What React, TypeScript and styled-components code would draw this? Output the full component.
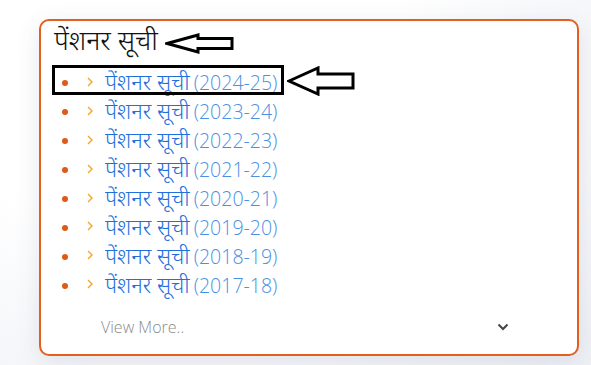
import React from "react";
import styled, { createGlobalStyle } from "styled-components";

const Global = createGlobalStyle`
  html, body { margin: 0; padding: 0; background: #ffffff; }
  body { width: 591px; height: 365px; overflow: hidden; font-family: "Noto Sans", sans-serif; }
`;

const Page = styled.div`
  width: 591px;
  height: 365px;
  padding: 19px 0 0 39px;
  box-sizing: border-box;
  background: radial-gradient(ellipse at 30% 20%, #ffffff 40%, #eef0f5 100%);
`;

const Card = styled.div`
  position: relative;
  width: 540px;
  height: 337px;
  box-sizing: border-box;
  border: 2px solid #e2601f;
  border-radius: 10px;
  background: #fff;
  box-shadow: 0 6px 24px rgba(60, 70, 110, 0.12);
  padding: 6px 0 0 13px;
  display: flex;
  flex-direction: column;
`;

const TitleRow = styled.div`
  display: flex;
  align-items: center;
  height: 34px;
`;

const Title = styled.h3`
  margin: 0;
  font-weight: 300;
  font-size: 27px;
  color: #111;
  font-family: "Noto Sans Devanagari", "Noto Sans", sans-serif;
  line-height: 34px;
`;

const List = styled.ul`
  list-style: none;
  margin: 8px 0 0 0;
  padding: 0;
`;

const Item = styled.li`
  position: relative;
  height: 28.9px;
  display: flex;
  align-items: center;
  padding-left: 8px;
  &::before {
    content: "";
    width: 6px;
    height: 6px;
    border-radius: 50%;
    background: #df5a17;
    margin-right: 19px;
    flex: none;
  }
`;

const Box = styled.div`
  position: absolute;
  left: -2px;
  top: -4px;
  width: 232px;
  height: 30px;
  box-sizing: border-box;
  border: 3px solid #000;
  pointer-events: none;
`;

const Chevron = styled.svg`
  width: 6px;
  height: 10px;
  flex: none;
  margin-right: 12px;
  margin-top: -3px;
`;

const LinkText = styled.a`
  text-decoration: none;
  color: #1f6fdc;
  font-size: 22px;
  font-weight: 300;
  font-family: "Noto Sans Devanagari", "Noto Sans", sans-serif;
  white-space: nowrap;
  display: flex;
  align-items: baseline;
  line-height: 28px;
  margin-top: 2px;
`;

const Year = styled.span`
  font-family: "Open Sans", sans-serif;
  font-weight: 300;
  font-size: 19.5px;
  color: #4a90e2;
  margin-left: 4px;
`;

const Footer = styled.div`
  display: flex;
  align-items: center;
  justify-content: space-between;
  margin-top: 15px;
  padding: 0 68px 0 47px;
  height: 24px;
`;

const ViewMore = styled.span`
  font-family: "Open Sans", sans-serif;
  font-weight: 300;
  font-size: 16px;
  color: #8a8a8a;
`;

const ArrowSvg = styled.svg`
  display: block;
`;

const Arrow = ({ w, h, shaftH, headW }: { w: number; h: number; shaftH: number; headW: number }) => {
  const m = h / 2;
  const s1 = m - shaftH / 2;
  const s2 = m + shaftH / 2;
  return (
    <ArrowSvg width={w} height={h} viewBox={`0 0 ${w} ${h}`}>
      <polygon
        points={`2,${m} ${headW},2 ${headW},${s1} ${w - 2},${s1} ${w - 2},${s2} ${headW},${s2} ${headW},${h - 2}`}
        fill="#fff"
        stroke="#000"
        strokeWidth={3}
        strokeLinejoin="miter"
      />
    </ArrowSvg>
  );
};

const TitleArrow = styled.span`
  display: flex;
  margin-left: 7px;
  margin-top: -2px;
`;

const SideArrow = styled.span`
  position: absolute;
  left: 233px;
  top: -3px;
  display: flex;
`;

const years = ["2024-25", "2023-24", "2022-23", "2021-22", "2020-21", "2019-20", "2018-19", "2017-18"];

export default function App() {
  return (
    <>
      <Global />
      <Page>
        <Card>
          <TitleRow>
            <Title>पेंशनर सूची</Title>
            <TitleArrow>
              <Arrow w={69} h={21} shaftH={10} headW={33} />
            </TitleArrow>
          </TitleRow>
          <List>
            {years.map((y, i) => (
              <Item key={y}>
                <Chevron viewBox="0 0 6 10">
                  <polyline points="1,1 5,5 1,9" fill="none" stroke="#f5a623" strokeWidth="1.4" />
                </Chevron>
                <LinkText href="#">
                  पेंशनर सूची<Year>({y})</Year>
                </LinkText>
                {i === 0 && (
                  <>
                    <Box />
                    <SideArrow>
                      <Arrow w={68} h={30} shaftH={14} headW={31} />
                    </SideArrow>
                  </>
                )}
              </Item>
            ))}
          </List>
          <Footer>
            <ViewMore>View More..</ViewMore>
            <svg width="12" height="8" viewBox="0 0 12 8">
              <polyline points="1.5,1.5 6,6 10.5,1.5" fill="none" stroke="#444" strokeWidth="2" />
            </svg>
          </Footer>
        </Card>
      </Page>
    </>
  );
}
